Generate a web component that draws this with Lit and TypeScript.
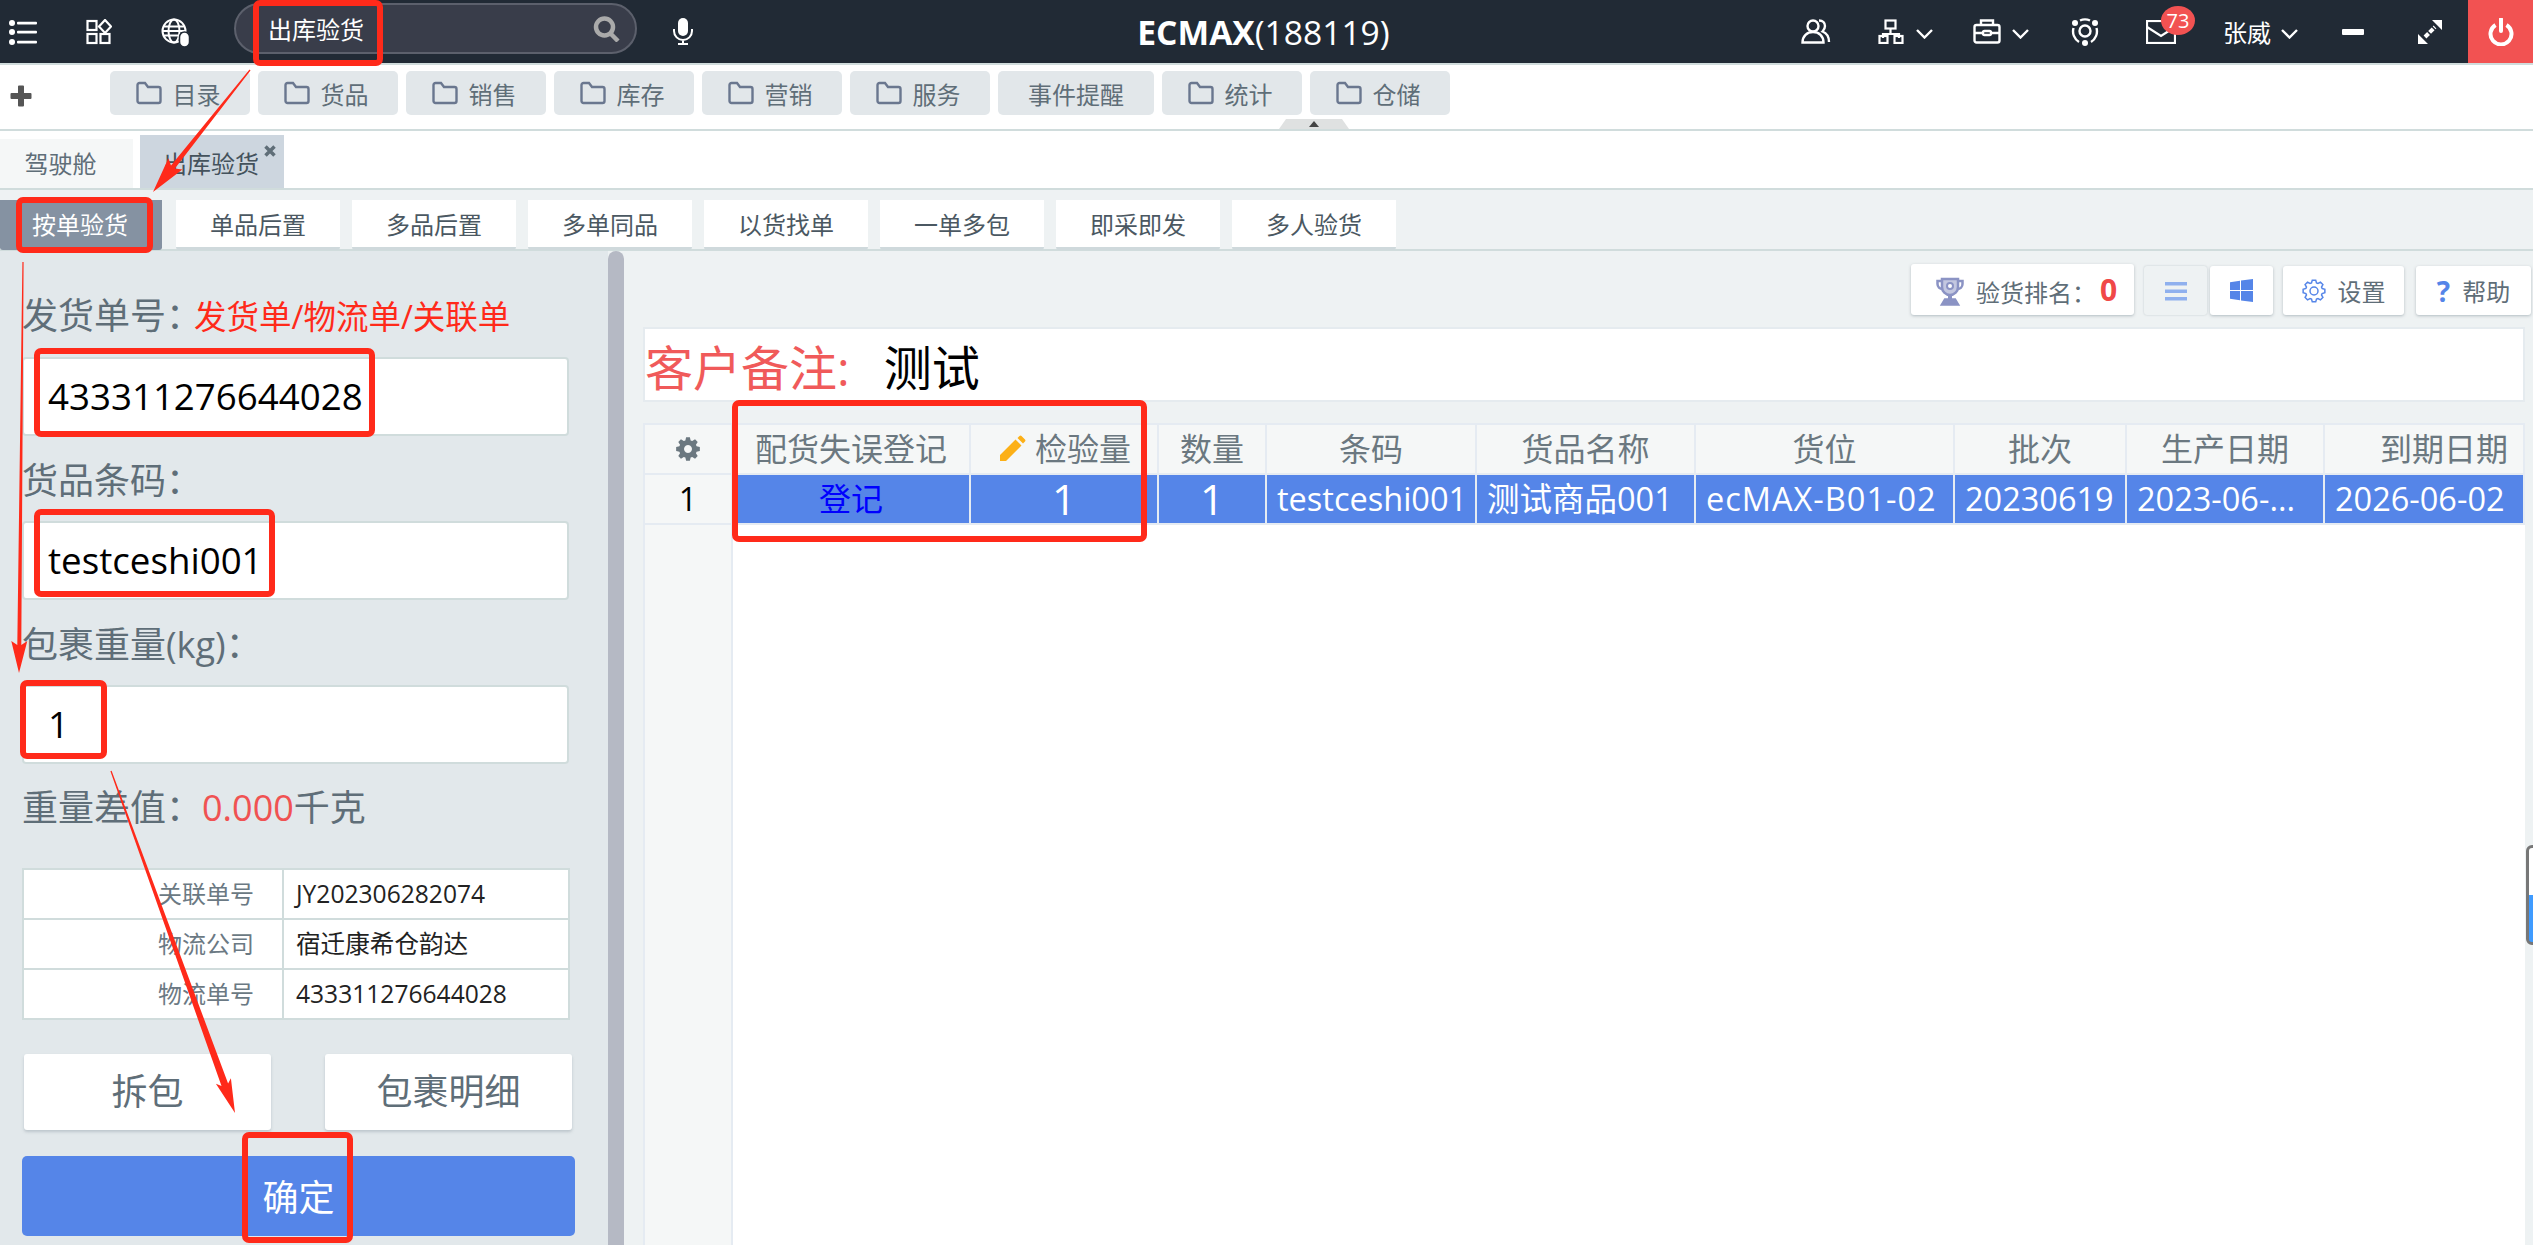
import { LitElement, html, css, svg } from 'lit';
import { customElement } from 'lit/decorators.js';

const MENU = [
  { label: '目录', folder: true }, { label: '货品', folder: true }, { label: '销售', folder: true },
  { label: '库存', folder: true }, { label: '营销', folder: true }, { label: '服务', folder: true },
  { label: '事件提醒', folder: false, wide: true }, { label: '统计', folder: true }, { label: '仓储', folder: true },
];
const MODES = ['单品后置', '多品后置', '多单同品', '以货找单', '一单多包', '即采即发', '多人验货'];
const INFO = [
  ['关联单号', 'JY202306282074'],
  ['物流公司', '宿迁康希仓韵达'],
  ['物流单号', '433311276644028'],
];
const COLUMNS = [
  { cls: 'reg', value: '登记' },
  { cls: 'big', label: '检验量', value: '1', pencil: true },
  { cls: 'big', label: '数量', value: '1' },
  { label: '条码', value: 'testceshi001' },
  { label: '货品名称', value: '测试商品001' },
  { cls: 'spaced', label: '货位', value: 'ecMAX-B01-02' },
  { label: '批次', value: '20230619' },
  { label: '生产日期', value: '2023-06-...' },
  { cls: 'last', label: '到期日期', value: '2026-06-02' },
];

// outer bounds of the red marker boxes, x0 y0 x1 y1
const MARKS = [
  [253, 0, 383, 66], [16, 197, 153, 253], [34, 348, 375, 437], [34, 509, 275, 597],
  [20, 680, 107, 759], [242, 1132, 353, 1243], [732, 400, 1147, 542],
];

function arrow(x0: number, y0: number, x1: number, y1: number, w: number, headLen: number, headW: number) {
  const len = Math.hypot(x1 - x0, y1 - y0);
  const ux = (x1 - x0) / len, uy = (y1 - y0) / len;
  const nx = -uy, ny = ux;
  const bx = x1 - ux * headLen, by = y1 - uy * headLen;
  const pts = [
    [x0 + nx * 0.6, y0 + ny * 0.6],
    [bx + nx * w / 2, by + ny * w / 2],
    [bx + nx * headW / 2 - ux * 4, by + ny * headW / 2 - uy * 4],
    [x1, y1],
    [bx - nx * headW / 2 - ux * 4, by - ny * headW / 2 - uy * 4],
    [bx - nx * w / 2, by - ny * w / 2],
    [x0 - nx * 0.6, y0 - ny * 0.6],
  ];
  return pts.map(p => p.map(n => n.toFixed(1)).join(',')).join(' ');
}

function gearPath(cx: number, cy: number, outer: number, inner: number, teeth: number) {
  let d = '';
  const step = (Math.PI * 2) / teeth;
  for (let i = 0; i < teeth; i++) {
    const a = i * step;
    const at = (r: number, t: number) => `${(cx + r * Math.cos(a + t)).toFixed(2)} ${(cy + r * Math.sin(a + t)).toFixed(2)}`;
    d += `${i ? 'L' : 'M'}${at(inner, -step * 0.38)} L${at(outer, -step * 0.2)} L${at(outer, step * 0.2)} L${at(inner, step * 0.38)} `;
  }
  return d + 'Z';
}

const folderIcon = html`<svg class="folder" width="26" height="24" viewBox="0 0 26 24" fill="none" stroke="#6a778f" stroke-width="2.4"><path d="M1.5 4a2 2 0 0 1 2-2h5.5l3 4h10.5a2 2 0 0 1 2 2v12a2 2 0 0 1-2 2h-19a2 2 0 0 1-2-2z"/></svg>`;
const chevron = html`<svg class="chev" width="17" height="10" viewBox="0 0 17 10" fill="none" stroke="#fff" stroke-width="2.4"><path d="M1 1l7.5 7.5L16 1"/></svg>`;

@customElement('app-root')
export class AppRoot extends LitElement {
  static styles = css`
    :host {
      display: block;
      position: relative;
      width: 100%;
      height: 100vh;
      overflow: hidden;
      background: #fff;
      font-family: "Open Sans", "Noto Sans CJK SC", sans-serif;
      color: #5f6e78;
    }
    .page { display: flex; flex-direction: column; height: 100%; }

    /* top bar */
    .top {
      flex: none;
      display: grid;
      grid-template-columns: 1fr auto 1fr;
      height: 63px;
      background: #212a35;
      border-bottom: 2px solid #d0dcdc;
      color: #fff;
    }
    .top svg { display: block; flex: none; }
    .top-left { display: flex; align-items: center; padding-left: 8px; }
    .top-right { display: flex; align-items: center; justify-content: flex-end; }
    .i-grid { margin-left: 48px; }
    .i-globe { margin-left: 49px; margin-top: 3px; }
    .search {
      display: flex;
      align-items: center;
      justify-content: space-between;
      box-sizing: border-box;
      width: 403px;
      height: 51px;
      margin: 0 0 6px 43px;
      padding: 0 14px 0 32px;
      background: #393d4a;
      border: 2px solid #5c606c;
      border-radius: 26px;
      font-size: 24px;
    }
    .i-mic { margin-left: 36px; }
    .title { align-self: center; font-size: 33.6px; line-height: 40px; margin-left: -6px; }
    .title b { font-weight: 700; }
    .i-user { margin-right: 47px; }
    .i-org { margin-right: 12px; }
    .chev { margin-top: 4px; }
    .i-org-chev { margin-right: 40px; }
    .i-case { margin-right: 11px; }
    .i-orbit { margin: 0 47px 0 42px; }
    .mail { position: relative; margin-right: 47px; }
    .badge {
      position: absolute;
      top: -14px;
      left: 15px;
      width: 34px;
      height: 29px;
      border-radius: 50%;
      background: #f25252;
      font-size: 20px;
      line-height: 29px;
      text-align: center;
    }
    .user { font-size: 24px; margin-right: 10px; }
    .i-minus { margin: 0 53px 0 44px; width: 22px; height: 6px; background: #fff; border-radius: 1px; }
    .power {
      display: flex;
      align-items: center;
      justify-content: center;
      width: 65px;
      height: 63px;
      margin-left: 25px;
      background: #f25252;
    }

    /* menu row */
    .menu {
      flex: none;
      position: relative;
      display: flex;
      align-items: flex-start;
      gap: 8px;
      box-sizing: border-box;
      height: 66px;
      padding: 6px 0 0 110px;
      border-bottom: 2px solid #d0dcdc;
    }
    .plus { position: absolute; left: 10px; top: 20px; }
    .menu-btn {
      display: flex;
      align-items: center;
      justify-content: center;
      gap: 11px;
      box-sizing: border-box;
      width: 140px;
      height: 44px;
      padding-right: 4px;
      background: #e2e7ea;
      border-radius: 5px;
      font-size: 24px;
    }
    .menu-btn.wide { width: 156px; padding-right: 0; }
    .collapse {
      position: absolute;
      left: 1279px;
      bottom: 0;
      width: 70px;
      height: 10px;
      background: #dfe1e1;
      clip-path: polygon(10% 0, 90% 0, 100% 100%, 0 100%);
    }
    .collapse::after {
      content: "";
      position: absolute;
      left: 30px;
      top: 2px;
      border: 5px solid transparent;
      border-top: 0;
      border-bottom: 6px solid #444;
    }

    /* tabs */
    .tabs {
      flex: none;
      display: flex;
      align-items: flex-end;
      gap: 7px;
      box-sizing: border-box;
      height: 59px;
      border-bottom: 2px solid #d0dcdc;
    }
    .tab {
      position: relative;
      box-sizing: border-box;
      width: 133px;
      height: 49px;
      padding-right: 12px;
      background: #f5f7f7;
      font-size: 24px;
      line-height: 49px;
      text-align: center;
    }
    .tab.on { width: 144px; height: 53px; background: #cdd6df; line-height: 57px; padding-right: 2px; color: #44525c; }
    .tab-x { position: absolute; top: 10px; right: 8px; }

    /* mode buttons */
    .modes {
      flex: none;
      display: flex;
      gap: 12px;
      box-sizing: border-box;
      height: 61px;
      padding-top: 10px;
      background: #eef2f3;
      border-bottom: 2px solid #d0dcdc;
    }
    .mode {
      width: 164px;
      height: 47px;
      background: #fff;
      border-bottom: 3px solid #cfd9dc;
      border-radius: 0 0 3px 3px;
      font-size: 24px;
      line-height: 50px;
      text-align: center;
      color: #4b5862;
    }
    .mode.on { box-sizing: content-box; width: 160px; padding-right: 2px; margin-right: 2px; background: #8592a2; border-bottom-color: #8592a2; color: #fff; }

    /* body */
    .body { flex: 1; display: flex; min-height: 0; background: #eef2f3; }
    .side {
      flex: none;
      box-sizing: border-box;
      width: 608px;
      padding: 40px 0 0 22px;
      background: #e2e8eb;
    }
    .split { flex: none; width: 16px; background: #b5b9c4; border-radius: 8px 8px 0 0; }
    .field-label { font-size: 36px; line-height: 50px; white-space: nowrap; }
    .hint { font-size: 32.5px; color: #ff2a1a; margin-left: -8px; }
    .input {
      box-sizing: border-box;
      width: 547px;
      height: 79px;
      margin: 15px 0 20px;
      padding-left: 24px;
      background: #fff;
      border: 2px solid #d0dcdc;
      border-radius: 4px;
      color: #000;
      font-size: 36.7px;
      line-height: 75px;
    }
    .input.weight { margin-bottom: 19px; }
    .diff { font-size: 36px; line-height: 50px; }
    .diff em { font-style: normal; color: #f05252; }
    .info {
      box-sizing: border-box;
      width: 548px;
      margin-top: 35px;
      border: 2px solid #d0dcdc;
      background: #d0dcdc;
      display: grid;
      grid-template-columns: 258px 1fr;
      gap: 2px;
      font-size: 24px;
      line-height: 48px;
    }
    .info div { background: #fff; }
    .info .k { text-align: right; padding-right: 28px; color: #6b7983; }
    .info .v { padding-left: 12px; color: #222; font-size: 24.6px; }
    .pair { display: flex; gap: 54px; margin: 34px 0 26px 2px; }
    .pair div {
      width: 247px;
      height: 76px;
      background: #fff;
      border-radius: 3px;
      box-shadow: 0 2px 3px rgba(120, 135, 145, 0.35);
      font-size: 36px;
      line-height: 76px;
      text-align: center;
    }
    .ok {
      width: 553px;
      height: 80px;
      background: #5585e8;
      border-radius: 5px;
      color: #fff;
      font-size: 36px;
      line-height: 84px;
      text-align: center;
    }

    /* right side */
    .main { flex: 1; min-width: 0; display: flex; flex-direction: column; padding: 13px 8px 0 19px; }
    .tools { flex: none; display: flex; justify-content: flex-end; margin-right: -6px; height: 51px; }
    .tool {
      display: flex;
      align-items: center;
      justify-content: center;
      box-sizing: border-box;
      height: 49px;
      margin-top: 2px;
      background: #fff;
      border-radius: 3px;
      box-shadow: 0 1px 3px rgba(120, 135, 145, 0.5);
      font-size: 24px;
      gap: 12px;
    }
    .rank { width: 223px; height: 51px; margin: 0 10px 0 0; padding: 3px 0 0 8px; }
    .rank b { color: #f04848; font-size: 30px; margin: -4px 0 0 -8px; }
    .toggle { width: 63px; background: #eef2f3; box-shadow: 0 0 2px rgba(120, 135, 145, 0.4); margin-right: 3px; }
    .win { width: 63px; margin-right: 10px; }
    .setting { width: 121px; margin-right: 12px; }
    .help { width: 115px; }
    .help i { font: 700 28px "Open Sans", sans-serif; color: #5585e8; }
    .remark {
      flex: none;
      display: flex;
      align-items: center;
      box-sizing: border-box;
      height: 75px;
      margin-top: 12px;
      background: #fff;
      border: 2px solid #e5ebef;
      font-size: 48px;
      color: #f05a5a;
      white-space: nowrap;
    }
    .remark span { color: #000; margin-left: 34px; }

    .table {
      flex: 1;
      display: flex;
      flex-direction: column;
      min-height: 0;
      margin-top: 21px;
      background: #fff;
      border: solid #e5ebf2;
      border-width: 2px 0 0 2px;
    }
    .cols {
      flex: none;
      display: grid;
      grid-template-columns: 88px 238px 188px 108px 210px 219px 259px 172px 198px 200px;
      height: 48px;
      border-bottom: 2px solid #e5ebf2;
    }
    .cols > div {
      display: flex;
      align-items: center;
      justify-content: center;
      box-sizing: border-box;
      min-width: 0;
      border-right: 2px solid #e5ebf2;
      line-height: 44px;
      white-space: nowrap;
    }
    .head { background: #f5f7f7; color: #6b7880; font-size: 32px; }
    .head .last { justify-content: flex-end; padding-right: 15px; }
    .head svg { margin-right: 9px; }
    .row > div { background: #5585e8; color: #fff; font-size: 32.5px; justify-content: flex-start; padding-left: 10px; }
    .row > .num { background: #f5f7f7; color: #000; font-size: 32px; justify-content: center; padding: 0; }
    .row > .reg { color: #0000ff; font-size: 32px; justify-content: center; padding: 0; }
    .row > .big { font-size: 42px; justify-content: center; padding: 0; }
    .row > .spaced { letter-spacing: 1px; }
    .rest { flex: 1; }
    .stub { box-sizing: border-box; width: 88px; height: 100%; background: #f5f7f7; border-right: 2px solid #e5ebf2; }

    /* things lying over the page */
    .edge {
      position: absolute;
      left: 2526px;
      top: 845px;
      width: 12px;
      height: 100px;
      box-sizing: border-box;
      border: 3px solid #777;
      border-radius: 6px;
      background: linear-gradient(#fff 50%, #3f9bff 50%);
    }
    .marks { position: absolute; left: 0; top: 0; pointer-events: none; }
  `;

  render() {
    return html`
      <div class="page">
        ${this.renderTop()}
        <div class="menu">
          <svg class="plus" width="22" height="22" viewBox="0 0 22 22"><path fill="#555" d="M8 1.5a1 1 0 0 1 1-1h4a1 1 0 0 1 1 1V8h6.5a1 1 0 0 1 1 1v4a1 1 0 0 1-1 1H14v6.5a1 1 0 0 1-1 1H9a1 1 0 0 1-1-1V14H1.5a1 1 0 0 1-1-1V9a1 1 0 0 1 1-1H8z"/></svg>
          ${MENU.map(m => html`<div class="menu-btn ${m.wide ? 'wide' : ''}">${m.folder ? folderIcon : ''}${m.label}</div>`)}
          <div class="collapse"></div>
        </div>
        <div class="tabs">
          <div class="tab">驾驶舱</div>
          <div class="tab on">出库验货
            <svg class="tab-x" width="12" height="12" viewBox="0 0 12 12" stroke="#5f6e78" stroke-width="3.5"><path d="M1.5 1.5l9 9M10.5 1.5l-9 9"/></svg>
          </div>
        </div>
        <div class="modes">
          <div class="mode on">按单验货</div>
          ${MODES.map(m => html`<div class="mode">${m}</div>`)}
        </div>
        <div class="body">
          ${this.renderSide()}
          <div class="split"></div>
          ${this.renderMain()}
        </div>
      </div>
      <div class="edge"></div>
      ${this.renderMarks()}
    `;
  }

  renderTop() {
    return html`
      <div class="top">
        <div class="top-left">
          <svg width="30" height="28" viewBox="0 0 30 28" fill="#fff">
            <circle cx="4" cy="5" r="3"/><circle cx="4" cy="14" r="3"/><circle cx="4" cy="24" r="3"/>
            <rect x="9" y="3.8" width="20" height="2.6" rx="1"/><rect x="9" y="12.8" width="20" height="2.6" rx="1"/><rect x="9" y="22.8" width="20" height="2.6" rx="1"/>
          </svg>
          <svg class="i-grid" width="26" height="26" viewBox="0 0 26 26" fill="none" stroke="#fff" stroke-width="2.2">
            <rect x="1.5" y="2" width="9" height="9"/><path d="M19 1l6 6.5-6 6.5-6-6.5z"/>
            <rect x="1.5" y="15" width="9" height="9"/><rect x="14.5" y="15" width="9" height="9"/>
          </svg>
          <svg class="i-globe" width="30" height="30" viewBox="0 0 30 30" fill="none" stroke="#fff" stroke-width="2">
            <circle cx="13" cy="13" r="11.5"/><ellipse cx="13" cy="13" rx="5.5" ry="11.5"/><path d="M2 8.5h22M2 13h22M2 17.5h22"/>
            <rect x="18.5" y="14" width="10" height="15" rx="5" fill="#fff" stroke="#212a35" stroke-width="1.5"/>
          </svg>
          <div class="search">出库验货
            <svg width="28" height="26" viewBox="0 0 28 26" fill="none" stroke="#aaa"><circle cx="11.5" cy="11" r="8.5" stroke-width="4.5"/><path d="M18 18l7 7" stroke-width="4.5"/></svg>
          </div>
          <svg class="i-mic" width="20" height="27" viewBox="0 0 20 27" fill="none" stroke="#fff" stroke-width="2"><rect x="5" y="0" width="10" height="18" rx="5" fill="#fff" stroke="none"/><path d="M1 11v2a9 9 0 0 0 18 0v-2M10 22v4M5 26h10"/></svg>
        </div>
        <div class="title"><b>ECMAX</b>(188119)</div>
        <div class="top-right">
          <svg class="i-user" width="30" height="25" viewBox="0 0 30 25" fill="none" stroke="#fff" stroke-width="2.4">
            <circle cx="12" cy="7" r="5.5"/><path d="M1.5 23.5c0-6.5 4.5-10.5 10.5-10.5s10.5 4 10.5 10.5z"/><path d="M18 1.5c4 0 6 2.5 6 5.5 0 2.5-1 4-2.5 5.5 4 1.5 6.5 5 6.5 10.5"/>
          </svg>
          <svg class="i-org" width="26" height="25" viewBox="0 0 26 25" fill="none" stroke="#fff" stroke-width="2.2">
            <rect x="7.5" y="1.5" width="10" height="8"/><path d="M12.5 10v5M5 19v-4h16v4"/><rect x="1.5" y="17" width="8" height="7"/><rect x="16.5" y="17" width="8" height="7"/>
          </svg>
          <span class="i-org-chev">${chevron}</span>
          <svg class="i-case" width="28" height="25" viewBox="0 0 28 25" fill="none" stroke="#fff" stroke-width="2.4">
            <path d="M8 6V1.5h12V6"/><rect x="1.5" y="6" width="25" height="17.5" rx="2"/><path d="M1.5 14H10M18 14h8.5"/><rect x="10" y="12" width="8" height="4" rx="1.5"/>
          </svg>
          ${chevron}
          <svg class="i-orbit" width="28" height="28" viewBox="0 0 28 28" fill="none" stroke="#fff" stroke-width="2.4">
            <circle cx="14" cy="13" r="5.5"/><path d="M9 2.5a12 12 0 0 1 10 0M2.5 10a12.5 12.5 0 0 0 5.5 14M25.5 10a12.5 12.5 0 0 1-5.5 14"/>
            <circle cx="4" cy="5" r="3" fill="#fff" stroke="none"/><circle cx="24" cy="5" r="3" fill="#fff" stroke="none"/><circle cx="14" cy="25" r="3" fill="#fff" stroke="none"/>
          </svg>
          <div class="mail">
            <svg width="30" height="24" viewBox="0 0 30 24" fill="none" stroke="#fff" stroke-width="2.2"><rect x="1" y="1" width="28" height="22"/><path d="M1 7l14 9 14-9"/></svg>
            <div class="badge">73</div>
          </div>
          <span class="user">张威</span>
          ${chevron}
          <div class="i-minus"></div>
          <svg width="26" height="26" viewBox="0 0 26 26" fill="#fff"><path d="M15 1h10v10zM1 15v10h10z"/><path d="M8 18L18 8" stroke="#fff" stroke-width="4" stroke-dasharray="5 1.5"/></svg>
          <div class="power">
            <svg width="26" height="28" viewBox="0 0 26 28" fill="none" stroke="#fff" stroke-width="4"><path d="M7.5 7a10.5 10.5 0 1 0 11 0"/><path d="M13 1v12" stroke-linecap="round"/></svg>
          </div>
        </div>
      </div>
    `;
  }

  renderSide() {
    return html`
      <div class="side">
        <div class="field-label">发货单号：<span class="hint">发货单/物流单/关联单</span></div>
        <div class="input">433311276644028</div>
        <div class="field-label">货品条码：</div>
        <div class="input">testceshi001</div>
        <div class="field-label">包裹重量(kg)：</div>
        <div class="input weight">1</div>
        <div class="diff">重量差值：<em>0.000</em>千克</div>
        <div class="info">
          ${INFO.map(([k, v]) => html`<div class="k">${k}</div><div class="v">${v}</div>`)}
        </div>
        <div class="pair"><div>拆包</div><div>包裹明细</div></div>
        <div class="ok">确定</div>
      </div>
    `;
  }

  renderMain() {
    return html`
      <div class="main">
        <div class="tools">
          <div class="tool rank">
            <svg width="28" height="29" viewBox="0 0 28 29" fill="none" stroke="#8b93c4" stroke-width="2.5">
              <path d="M6 2h16v8a8 8 0 0 1-16 0z" fill="#c3c7e0"/><path d="M6 4H1.5v3a5 5 0 0 0 5 5M22 4h4.5v3a5 5 0 0 1-5 5"/>
              <circle cx="14" cy="9" r="3" fill="#fff" stroke-width="2"/><path d="M14 18v5" stroke-width="4"/><path d="M6 27.5h16l-3-5H9z" fill="#8b93c4"/>
            </svg>
            <span>验货排名：</span><b>0</b>
          </div>
          <div class="tool toggle">
            <svg width="22" height="20" viewBox="0 0 22 20" fill="#8fb0ee"><rect y="1" width="22" height="3.5"/><rect y="8.5" width="22" height="3.5"/><rect y="16" width="22" height="3.5"/></svg>
          </div>
          <div class="tool win">
            <svg width="23" height="23" viewBox="0 0 23 23" fill="#5585e8"><path d="M0 3.2L10 1.7v9.3H0zM11 1.5L23 0v11H11zM0 12h10v9.3L0 19.8zM11 12h12v11l-12-1.6z"/></svg>
          </div>
          <div class="tool setting">
            <svg width="24" height="24" viewBox="0 0 24 24" fill="none" stroke="#5585e8" stroke-width="1.5"><path d="${gearPath(12, 12, 11, 8.5, 8)}"/><circle cx="12" cy="12" r="4"/></svg>
            设置
          </div>
          <div class="tool help"><i>?</i>帮助</div>
        </div>
        <div class="remark">客户备注:<span>测试</span></div>
        <div class="table">
          <div class="cols head">
            <div>
              <svg width="26" height="26" viewBox="0 0 26 26" fill="#6b7880" fill-rule="evenodd" style="margin:0"><path d="${gearPath(13, 13, 12, 9, 8)} M13 9a4 4 0 1 0 0.01 0z"/></svg>
            </div>
            <div>配货失误登记</div>
            ${COLUMNS.slice(1).map(c => html`<div class="${c.cls === 'last' ? 'last' : ''}">
              ${c.pencil ? html`<svg width="29" height="28" viewBox="0 0 29 28" fill="#fcb017"><path d="M18.5 4.5l6 6L9 26H3v-6zM20.500 3l2-2a1.500 1.500 0 0 1 2 0l3.500 3.500a1.500 1.500 0 0 1 0 2l-2 2z"/></svg>` : ''}${c.label}</div>`)}
          </div>
          <div class="cols row">
            <div class="num">1</div>
            ${COLUMNS.map(c => html`<div class="${c.cls === 'last' ? '' : c.cls ?? ''}">${c.value}</div>`)}
          </div>
          <div class="rest"><div class="stub"></div></div>
        </div>
      </div>
    `;
  }

  renderMarks() {
    return html`
      <svg class="marks" width="2533" height="1245" viewBox="0 0 2533 1245" fill="none">
        ${MARKS.map(([x0, y0, x1, y1]) => svg`<rect x="${x0 + 3}" y="${y0 + 3}" width="${x1 - x0 - 6}" height="${y1 - y0 - 6}" rx="4" stroke="#ff2a1a" stroke-width="6"/>`)}
        <polygon fill="#ff2a1a" points="${arrow(250, 70, 153, 192, 5, 32, 18)}"/>
        <polygon fill="#ff2a1a" points="${arrow(23, 262, 19, 673, 4, 28, 16)}"/>
        <polygon fill="#ff2a1a" points="${arrow(111, 771, 235, 1113, 7, 30, 16)}"/>
      </svg>
    `;
  }
}
